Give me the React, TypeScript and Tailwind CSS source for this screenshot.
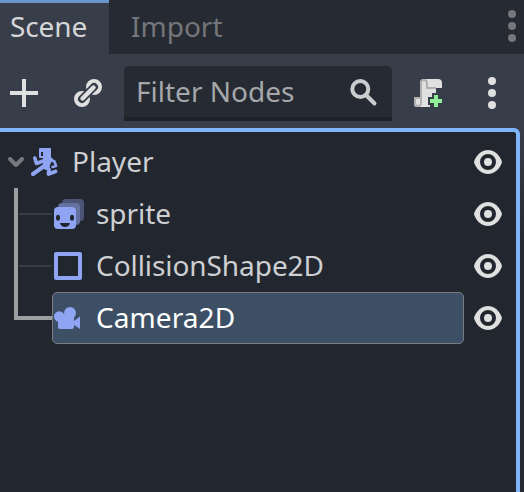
import type { ReactNode } from "react";

function Eye() {
  return (
    <svg className="h-8 w-8 shrink-0" viewBox="0 0 16 16" fill="#e0e0e0">
      <path
        fillRule="evenodd"
        d="M8 2C3 2 1 7.500 1 8s2 6 7 6 7-5.500 7-6-2-6-7-6zm0 2a4 4 0 1 1 0 8 4 4 0 0 1 0-8zm0 2a2 2 0 0 0 0 4 2 2 0 0 0 0-4z"
      />
    </svg>
  );
}

function Dots({ color }: { color: string }) {
  return (
    <svg className="h-8 w-2 shrink-0" viewBox="0 0 8 32" fill={color}>
      <circle cx="4" cy="4" r="4" />
      <circle cx="4" cy="16" r="4" />
      <circle cx="4" cy="28" r="4" />
    </svg>
  );
}

function PlayerIcon() {
  return (
    <svg className="h-7 w-7 shrink-0" viewBox="0 0 28 28" fill="#8fa4f2">
      <path fillRule="evenodd" d="M9 0H19Q20 0 20 1V9Q20 10 19 10H9Q8 10 8 9V1Q8 0 9 0ZM10 4V8H12V4Z" />
      <path d="M12 9H19L22 10.500L19 17L18.500 21L15 22L11 20L12 15Z" />
      <g fill="none" stroke="#8fa4f2" strokeLinecap="round" strokeLinejoin="round">
        <path d="M3.800 10L5.500 15.500L12 13" strokeWidth="3.600" />
        <path d="M2 26L12.500 18.500" strokeWidth="4" />
        <path d="M14 19L18 21.500L17.500 26L24.500 23.500" strokeWidth="3.800" />
        <path d="M20 12L23.500 13.500L25 18L21.500 19" strokeWidth="2.600" />
      </g>
    </svg>
  );
}

function SpriteIcon() {
  return (
    <svg className="h-[30px] w-[30px] shrink-0" viewBox="0 0 30 30">
      <rect x="8" y="0" width="22" height="22" rx="4" fill="#4c5578" />
      <rect x="4" y="4" width="22" height="22" rx="4" fill="#65719f" />
      <rect x="0" y="8" width="22" height="22" rx="4" fill="#8fa4f2" />
      <ellipse cx="4" cy="18.700" rx="2" ry="3" fill="#22272f" />
      <ellipse cx="18" cy="18.700" rx="2" ry="3" fill="#22272f" />
      <path d="M6 24H16Q15 28 11 28T6 24Z" fill="#22272f" />
    </svg>
  );
}

function CameraIcon() {
  return (
    <svg className="h-[22px] w-[26px] shrink-0" viewBox="0 0 26 22" fill="#8fa4f2">
      <circle cx="16" cy="6" r="6" />
      <circle cx="5.300" cy="9.600" r="5.300" />
      <path d="M4 8H20V14L26 9.500V22L20 18V20Q20 22 18 22H6Q4 22 4 20Z" />
    </svg>
  );
}

function LinkIcon() {
  return (
    <svg className="h-7 w-7 shrink-0" viewBox="0 0 28 28" fill="none">
      <circle cx="20" cy="8" r="5.700" stroke="#e0e0e0" strokeWidth="4.600" />
      <circle cx="8" cy="20" r="5.700" stroke="#e0e0e0" strokeWidth="4.600" />
      <path d="M8 20L20 8" stroke="#383d4a" strokeWidth="8" strokeLinecap="round" />
      <path d="M8.500 19.500L19.500 8.500" stroke="#e0e0e0" strokeWidth="4.400" strokeLinecap="round" />
    </svg>
  );
}

function ScriptIcon() {
  return (
    <svg className="h-7 w-7 shrink-0" viewBox="0 0 28 28">
      <path
        fill="#e0e0e0"
        d="M10 0H24Q28 0 28 4V9H22V14H18V18H14V26H16V28H3Q0 28 0 25V18H6V4Q6 0 10 0Z"
      />
      <path
        fill="none"
        stroke="#b0b0b0"
        strokeWidth="2"
        d="M22 9H13V4A3 3 0 0 0 7 4V24A3 3 0 0 1 1 24V19H6"
      />
      <path fill="#8eef97" d="M20 16H24V20H28V24H24V28H20V24H16V20H20Z" />
    </svg>
  );
}

function Child({ icon, name, selected, last }: { icon: ReactNode; name: string; selected?: boolean; last?: boolean }) {
  return (
    <div className="flex h-[52px] items-center">
      <div className="flex h-full w-[52px] shrink-0 pl-[14px]">
        {last ? (
          <div className="h-7 w-full border-b-4 border-l-4 border-[#9d9ea2]" />
        ) : (
          <>
            <div className="h-full w-1 bg-[#9d9ea2]" />
            <div className="ml-px h-[2px] flex-1 self-center bg-[#373b43]" />
          </>
        )}
      </div>
      <div
        className={
          "flex h-[52px] w-[412px] shrink-0 items-center rounded-[5px] border pl-px " +
          (selected
            ? "border-[#777c84] bg-[#3d4f65] tracking-[0.08px] text-white"
            : "border-transparent tracking-[-0.07px]")
        }
      >
        <div className="flex w-[42px] shrink-0">{icon}</div>
        <span className="whitespace-nowrap pb-[2px]">{name}</span>
      </div>
      <div className="ml-2 flex">
        <Eye />
      </div>
    </div>
  );
}

export default function App() {
  return (
    <div className="flex h-[492px] w-[524px] flex-col overflow-hidden bg-[#383d4a] font-['Noto_Sans',sans-serif] text-[28px] leading-[38px] text-[#cdcfd2]">
      <div className="flex h-[54px] shrink-0 bg-[#262a32]">
        <div className="w-[109px] border-t-[3px] border-[#6996cb] bg-[#383d4a] pl-[10px] pt-1 tracking-[-0.1px] text-[#d5d6d8]">
          Scene
        </div>
        <div className="pl-[22px] pt-[7px] text-[#74767b]">Import</div>
        <div className="ml-auto pr-2 pt-[10px]">
          <Dots color="#75777c" />
        </div>
      </div>
      <div className="flex h-[74px] shrink-0 items-start">
        <svg className="ml-[10px] mt-[25px] h-7 w-7 shrink-0" viewBox="0 0 28 28">
          <path d="M14 0V28M0 14H28" stroke="#e0e0e0" strokeWidth="4" />
        </svg>
        <div className="ml-9 mt-[25px]">
          <LinkIcon />
        </div>
        <div className="ml-[22px] mt-3 flex h-[55px] w-[268px] shrink-0 rounded-t-[5px] border-b-4 border-[#1e2128] bg-[#262a32] pl-3 pt-[6px] text-[#a5a7ab]">
          <span>Filter Nodes</span>
          <svg className="ml-auto mr-[14px] mt-[7px] h-7 w-7" viewBox="0 0 28 28" fill="none" stroke="#cbccce">
            <circle cx="10.300" cy="10" r="8" strokeWidth="4" />
            <path d="M16 16L24.500 24.500" strokeWidth="4" strokeLinecap="round" />
          </svg>
        </div>
        <div className="ml-[22px] mt-[25px]">
          <ScriptIcon />
        </div>
        <div className="ml-[46px] mt-[23px]">
          <Dots color="#e0e0e0" />
        </div>
      </div>
      <div className="flex flex-1 bg-gradient-to-b from-[#383d4a] to-[#262a32] to-30%">
        <div className="w-[520px] rounded-tr-[6px] border-r-4 border-t-4 border-[#7fb5f9] bg-[#22272f] pt-1">
          <div className="flex h-[52px] items-center">
            <svg className="ml-2 h-[10px] w-4" viewBox="0 0 16 10" fill="none">
              <path d="M2 2L8 8L14 2" stroke="#77797d" strokeWidth="4" strokeLinecap="round" strokeLinejoin="round" />
            </svg>
            <div className="ml-[7px]">
              <PlayerIcon />
            </div>
            <span className="ml-[13px] pb-[2px]">Player</span>
            <div className="ml-auto mr-3">
              <Eye />
            </div>
          </div>
          <Child icon={<SpriteIcon />} name="sprite" />
          <Child
            icon={<div className="h-7 w-7 rounded-[2px] border-4 border-[#8fa4f2]" />}
            name="CollisionShape2D"
          />
          <Child icon={<CameraIcon />} name="Camera2D" selected last />
        </div>
      </div>
    </div>
  );
}
